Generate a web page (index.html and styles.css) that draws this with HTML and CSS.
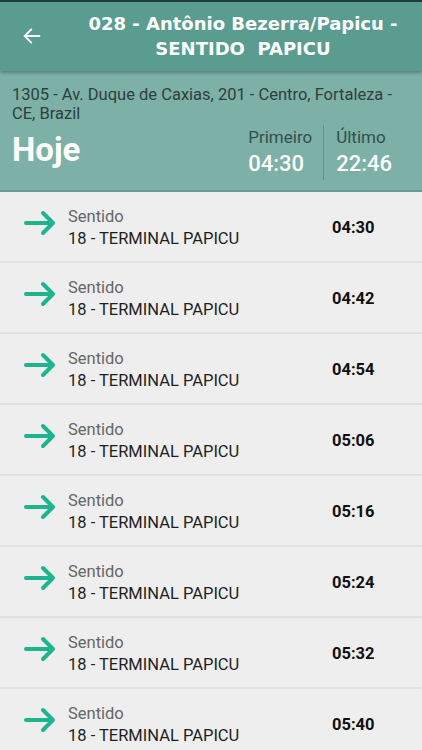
FILE: index.html
```html
<!DOCTYPE html>
<html lang="pt">
<head>
<meta charset="utf-8">
<link rel="stylesheet" href="styles.css">
</head>
<body>
<div class="app">
  <header class="toolbar">
    <button class="back" aria-label="Voltar">
      <svg width="22" height="22" viewBox="0 0 24 24"><path d="M20 12H5M11 5l-7 7 7 7" fill="none" stroke="#fff" stroke-width="2" stroke-linecap="square"/></svg>
    </button>
    <h1 class="title">028 - Antônio Bezerra/Papicu -<br>SENTIDO&nbsp; PAPICU</h1>
  </header>
  <section class="info">
    <p class="address">1305 - Av. Duque de Caxias, 201 - Centro, Fortaleza - CE, Brazil</p>
    <div class="info-row">
      <div class="day">Hoje</div>
      <div class="stats">
        <div class="stat">
          <div class="stat-label">Primeiro</div>
          <div class="stat-value">04:30</div>
        </div>
        <div class="divider"></div>
        <div class="stat">
          <div class="stat-label">Último</div>
          <div class="stat-value">22:46</div>
        </div>
      </div>
    </div>
  </section>
  <ul class="list">
    <li class="row"><svg class="arrow" viewBox="0 0 34 26"><path d="M3 13H30M20 3l10 10-10 10" fill="none" stroke="#1db58d" stroke-width="4" stroke-linecap="round" stroke-linejoin="round"/></svg><div class="text"><div class="label">Sentido</div><div class="dest">18 - TERMINAL PAPICU</div></div><div class="time">04:30</div></li>
    <li class="row"><svg class="arrow" viewBox="0 0 34 26"><path d="M3 13H30M20 3l10 10-10 10" fill="none" stroke="#1db58d" stroke-width="4" stroke-linecap="round" stroke-linejoin="round"/></svg><div class="text"><div class="label">Sentido</div><div class="dest">18 - TERMINAL PAPICU</div></div><div class="time">04:42</div></li>
    <li class="row"><svg class="arrow" viewBox="0 0 34 26"><path d="M3 13H30M20 3l10 10-10 10" fill="none" stroke="#1db58d" stroke-width="4" stroke-linecap="round" stroke-linejoin="round"/></svg><div class="text"><div class="label">Sentido</div><div class="dest">18 - TERMINAL PAPICU</div></div><div class="time">04:54</div></li>
    <li class="row"><svg class="arrow" viewBox="0 0 34 26"><path d="M3 13H30M20 3l10 10-10 10" fill="none" stroke="#1db58d" stroke-width="4" stroke-linecap="round" stroke-linejoin="round"/></svg><div class="text"><div class="label">Sentido</div><div class="dest">18 - TERMINAL PAPICU</div></div><div class="time">05:06</div></li>
    <li class="row"><svg class="arrow" viewBox="0 0 34 26"><path d="M3 13H30M20 3l10 10-10 10" fill="none" stroke="#1db58d" stroke-width="4" stroke-linecap="round" stroke-linejoin="round"/></svg><div class="text"><div class="label">Sentido</div><div class="dest">18 - TERMINAL PAPICU</div></div><div class="time">05:16</div></li>
    <li class="row"><svg class="arrow" viewBox="0 0 34 26"><path d="M3 13H30M20 3l10 10-10 10" fill="none" stroke="#1db58d" stroke-width="4" stroke-linecap="round" stroke-linejoin="round"/></svg><div class="text"><div class="label">Sentido</div><div class="dest">18 - TERMINAL PAPICU</div></div><div class="time">05:24</div></li>
    <li class="row"><svg class="arrow" viewBox="0 0 34 26"><path d="M3 13H30M20 3l10 10-10 10" fill="none" stroke="#1db58d" stroke-width="4" stroke-linecap="round" stroke-linejoin="round"/></svg><div class="text"><div class="label">Sentido</div><div class="dest">18 - TERMINAL PAPICU</div></div><div class="time">05:32</div></li>
    <li class="row"><svg class="arrow" viewBox="0 0 34 26"><path d="M3 13H30M20 3l10 10-10 10" fill="none" stroke="#1db58d" stroke-width="4" stroke-linecap="round" stroke-linejoin="round"/></svg><div class="text"><div class="label">Sentido</div><div class="dest">18 - TERMINAL PAPICU</div></div><div class="time">05:40</div></li>
  </ul>
</div>
</body>
</html>
```
FILE: styles.css
```css
* { box-sizing: border-box; }
html, body { margin: 0; padding: 0; }
body {
  width: 422px;
  height: 750px;
  overflow: hidden;
  background: #eeeeee;
  font-family: Roboto, "Noto Sans", sans-serif;
}
.app { display: flex; flex-direction: column; }
.toolbar {
  height: 71px;
  background: #5b9c90;
  border-top: 2px solid #1f3b37;
  display: flex;
  align-items: center;
  padding-left: 20px;
  position: relative;
  z-index: 1;
  box-shadow: 0 2px 3px rgba(0,0,0,0.25);
}
.back {
  background: none;
  border: 0;
  padding: 0;
  width: 24px;
  height: 24px;
  display: flex;
  align-items: center;
  justify-content: center;
  margin-top: -2px;
}
.title {
  margin: 0;
  flex: 1;
  text-align: center;
  color: #fff;
  font-family: "DejaVu Sans", sans-serif;
  font-weight: bold;
  font-size: 18px;
  line-height: 25px;
  letter-spacing: 0;
  padding-left: 20px;
  margin-top: -2px;
}
.info {
  background: #7db0a7;
  height: 121px;
  padding: 14px 12px 0 12px;
  border-bottom: 2px solid #6a9b93;
}
.address {
  margin: 0;
  font-size: 16.5px;
  line-height: 19px;
  color: #2e3f3c;
}
.info-row {
  display: flex;
  justify-content: space-between;
  align-items: flex-start;
  margin-top: 2px;
}
.day {
  color: #fff;
  font-weight: bold;
  font-size: 33px;
  line-height: 40px;
  margin-top: 5px;
}
.stats {
  display: flex;
  margin-right: 18px;
}
.stat { display: flex; flex-direction: column; }
.stat-label {
  font-size: 17px;
  line-height: 22px;
  color: #31504b;
  margin-top: 1px;
}
.stat-value {
  font-size: 22px;
  line-height: 30px;
  font-weight: 500;
  color: #fff;
  margin-top: 1px;
}
.divider {
  width: 1px;
  background: #5f958c;
  margin: 0 12px 0 11px;
  height: 55px;
}
.list {
  list-style: none;
  margin: 0;
  padding: 0;
}
.row {
  height: 71px;
  border-bottom: 2px solid #e1e1e1;
  display: flex;
  align-items: center;
  padding-left: 23px;
}
.arrow {
  width: 34px;
  height: 26px;
  margin-top: -8px;
}
.text {
  margin-left: 11px;
  width: 264px;
  margin-top: 2px;
}
.label {
  font-size: 16.5px;
  line-height: 22px;
  color: #666;
}
.dest {
  font-size: 16.5px;
  line-height: 22px;
  color: #1f1f1f;
}
.time {
  font-weight: bold;
  font-size: 16.5px;
  color: #111;
  margin-top: 1px;
}
```
